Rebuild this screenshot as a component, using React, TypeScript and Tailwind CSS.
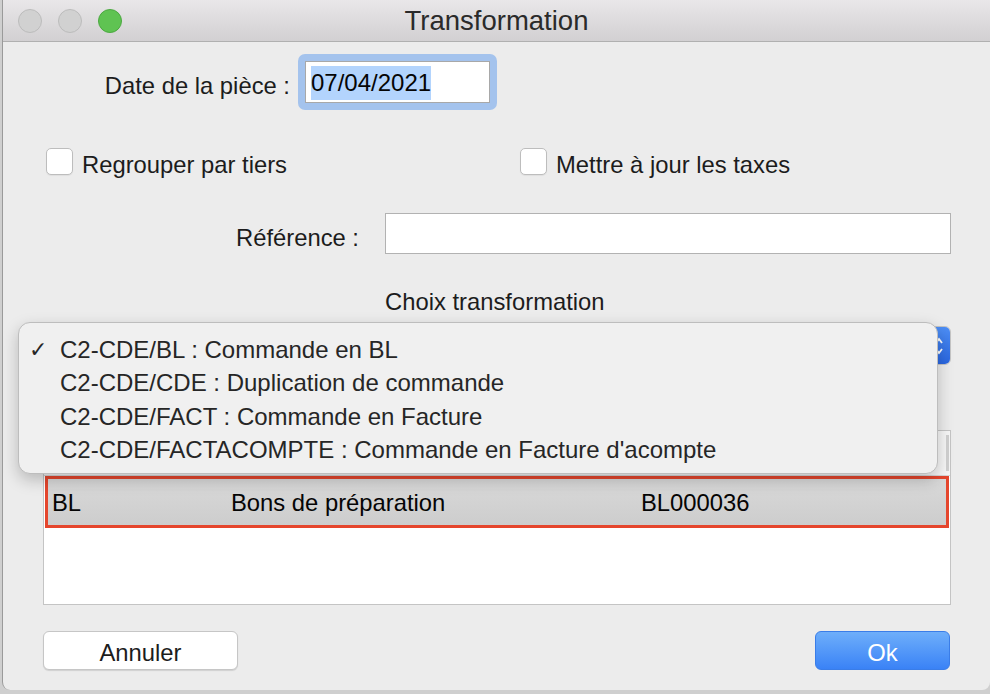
import { useState } from "react";

const font = "font-['Liberation_Sans',Arial,sans-serif]";

const options = [
  "C2-CDE/BL : Commande en BL",
  "C2-CDE/CDE : Duplication de commande",
  "C2-CDE/FACT : Commande en Facture",
  "C2-CDE/FACTACOMPTE : Commande en Facture d'acompte",
];

function TrafficLights() {
  return (
    <div className="flex items-center gap-[16px] pl-[15px]">
      <span className="w-[24px] h-[24px] rounded-full bg-[#d1d1d1] border border-[#bcbcbc]" />
      <span className="w-[24px] h-[24px] rounded-full bg-[#d1d1d1] border border-[#bcbcbc]" />
      <span className="w-[24px] h-[24px] rounded-full bg-[#5fc352] border border-[#4ca941]" />
    </div>
  );
}

function Checkbox({ label }: { label: string }) {
  return (
    <label className="flex items-center gap-[9px]">
      <span className="w-[27px] h-[27px] rounded-[5px] bg-white border border-[#bdbdbd] shadow-[0_1px_1px_rgba(0,0,0,0.06)]" />
      <span className="pt-[6px]">{label}</span>
    </label>
  );
}

export default function App() {
  const [choice] = useState(0);

  return (
    <div className={`w-[990px] h-[694px] bg-[#cfcfcf] text-[23.8px] text-[#1c1c1c] ${font}`}>
      <div className="ml-[2px] w-[988px] h-[690px] bg-[#ececec] rounded-b-[8px] border-l border-[#9a9a9a] overflow-hidden flex flex-col">
        {/* title bar */}
        <div className="relative h-[42px] shrink-0 bg-gradient-to-b from-[#e9e7e9] to-[#d2d0d2] border-b border-[#b0b0b0] flex items-center">
          <TrafficLights />
          <div className="absolute inset-0 flex items-center justify-center text-[27.5px] text-[#2a2a2a]">
            Transformation
          </div>
        </div>

        <div className="relative flex flex-col">
          {/* date */}
          <div className="flex items-center mt-[12px] h-[56px]">
            <div className="w-[287px] text-right pt-[8px]">Date de la pièce :</div>
            <div className="ml-[8px] w-[199px] h-[56px] rounded-[7px] bg-[#a4c3ed] p-[7px]">
              <div className="w-full h-full bg-white border border-[#a8a8a8] flex items-center pl-[5px] pt-[2px]">
                <span className="bg-[#b3d4fd] text-[#050505] leading-[34px] text-[24px]">07/04/2021</span>
              </div>
            </div>
          </div>

          {/* checkboxes */}
          <div className="flex items-center mt-[38px] h-[27px]">
            <div className="ml-[43px] w-[474px]">
              <Checkbox label="Regrouper par tiers" />
            </div>
            <Checkbox label="Mettre à jour les taxes" />
          </div>

          {/* reference */}
          <div className="flex items-center mt-[38px] h-[41px]">
            <div className="w-[356px] text-right pt-[8px]">Référence :</div>
            <div className="ml-[26px] w-[566px] h-[41px] bg-white border border-[#b2b2b2]" />
          </div>

          {/* choix */}
          <div className="mt-[32px] h-[28px] leading-[28px] pl-[382px] pt-[2px]">Choix transformation</div>

          {/* select (covered by open menu) */}
          <div className="mt-[12px] ml-[40px] w-[908px] h-[39px] flex rounded-[6px] bg-white border border-[#c4c4c4] overflow-hidden">
            <div className="flex-1" />
            <div className="w-[22px] bg-gradient-to-b from-[#4d8ef5] to-[#2a66e0] flex flex-col items-center justify-center text-white">
              <svg width="10" height="22" viewBox="0 0 10 22" fill="none" stroke="white" strokeWidth="1.8">
                <path d="M2 8 L5 4 L8 8" />
                <path d="M2 14 L5 18 L8 14" />
              </svg>
            </div>
          </div>

          {/* table */}
          <div className="mt-[65px] ml-[40px] w-[908px] h-[175px] bg-white border border-[#c4c4c4] flex flex-col">
            <div className="h-[45px] shrink-0 bg-[#f6f6f6] border-b border-[#d6d6d6] flex justify-end">
              <div className="w-[3px] mr-[1px] my-[4px] bg-[#d0d0d0]" />
            </div>
            <div className="mx-[1px] h-[52px] shrink-0 border-[3px] border-[#e5462d] bg-gradient-to-b from-[#d9d9d9] to-[#cdcdcd] flex items-center pl-[4px] pt-[2px] text-[#050505]">
              <div className="w-[179px]">BL</div>
              <div className="w-[410px]">Bons de préparation</div>
              <div>BL000036</div>
            </div>
          </div>

          {/* buttons */}
          <div className="mt-[26px] flex items-center justify-between pl-[40px] pr-[40px]">
            <button className="w-[195px] h-[39px] rounded-[6px] bg-white border border-[#c6c6c6] shadow-[0_1px_1px_rgba(0,0,0,0.12)] text-[#1c1c1c] pt-[3px]">
              Annuler
            </button>
            <button className="w-[135px] h-[39px] rounded-[6px] bg-gradient-to-b from-[#6eaefa] to-[#3a82f6] border border-[#3a7de8] text-white pt-[3px]">
              Ok
            </button>
          </div>

          {/* open popup menu */}
          <div className="absolute left-[15px] top-[280px] w-[920px] h-[152px] rounded-[12px] bg-[#f0f0f0] border border-[#bdbdbd] shadow-[0_6px_16px_rgba(0,0,0,0.22)] pt-[10px] text-[24px]">
            {options.map((o, i) => (
              <div key={o} className="h-[33.5px] flex items-center text-[#262626]">
                <span className="w-[41px] pl-[10px] text-[22px]">{i === choice ? "✓" : ""}</span>
                <span>{o}</span>
              </div>
            ))}
          </div>
        </div>
      </div>
    </div>
  );
}
